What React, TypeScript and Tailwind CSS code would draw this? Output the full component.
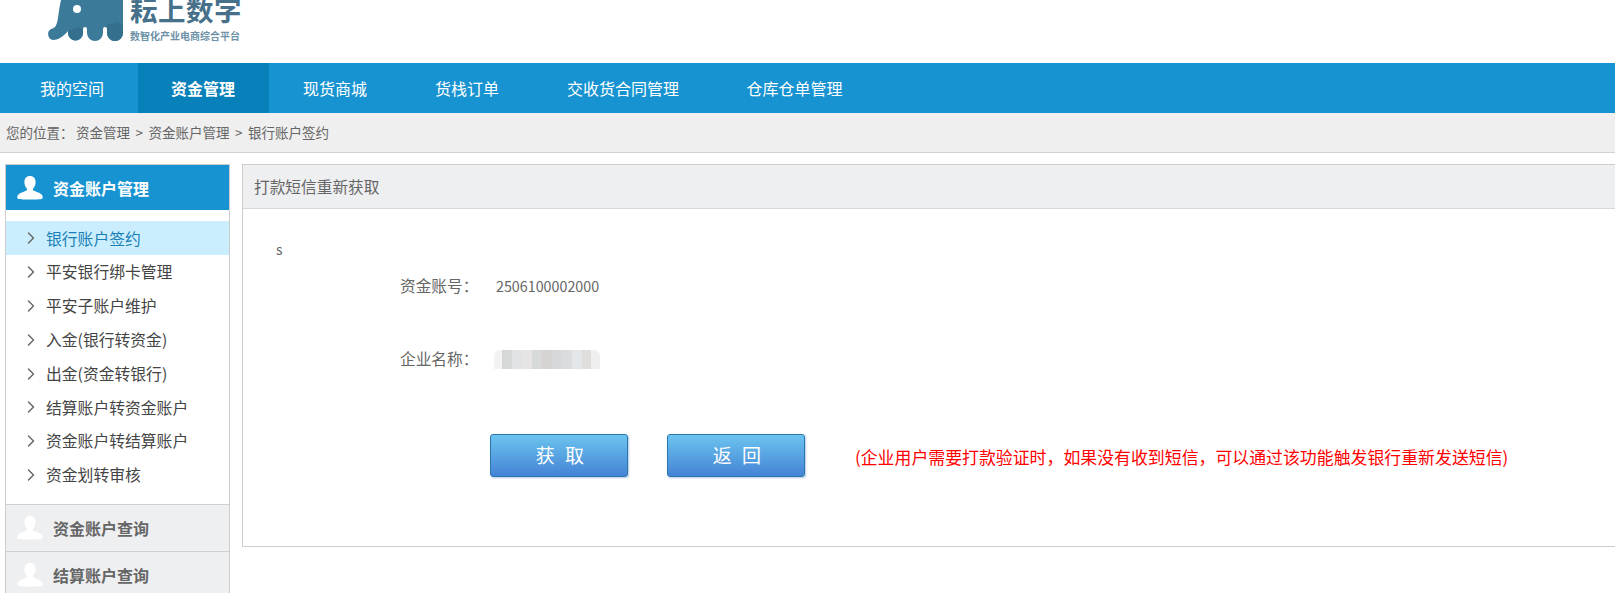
import React from 'react';
import { ChevronRight } from 'lucide-react';

const font = "font-['Noto_Sans_CJK_SC','Liberation_Sans',sans-serif]";

const navItems = [
  { label: '我的空间', pad: 'pl-[40px] pr-[34px]' },
  { label: '资金管理', pad: 'pl-[33px] pr-[34px]', active: true },
  { label: '现货商城', pad: 'px-[34px]' },
  { label: '货栈订单', pad: 'px-[34px]' },
  { label: '交收货合同管理', pad: 'px-[34px]' },
  { label: '仓库仓单管理', pad: 'px-[33.500px]' },
];

const menuItems = [
  '银行账户签约',
  '平安银行绑卡管理',
  '平安子账户维护',
  '入金(银行转资金)',
  '出金(资金转银行)',
  '结算账户转资金账户',
  '资金账户转结算账户',
  '资金划转审核',
];

// mosaic over the company name
const mosaic = [
  'w-[8px] bg-[#f3f3f3]',
  'w-[10px] bg-[#d6d8d8]',
  'w-[10px] bg-[#e1e3e5]',
  'w-[10px] bg-[#e6e5e3]',
  'w-[10px] bg-[#d8dada]',
  'w-[10px] bg-[#d6d3d0]',
  'w-[10px] bg-[#d6d9dc]',
  'w-[10px] bg-[#dadddd]',
  'w-[10px] bg-[#e4e7e9]',
  'w-[9px] bg-[#dfdedd]',
  'w-[9px] bg-[#efefef] rounded-tr-[6px]',
];

const UserIcon = ({ className }: { className: string }) => (
  <svg viewBox="0 0 26 24" className={className} fill="currentColor">
    <path d="M13 0c3.600 0 5.600 2.600 5.600 6 0 2.600-1 5-2.400 6.400-.5.6-.4 1.600.3 2 2.400 1.200 7.200 2.400 8.800 5 .7 1.300.6 3.200-.8 3.600-1 .3-3 .5-11.500.5s-10.500-.2-11.500-.5C.1 22.600 0 20.700.7 19.400c1.600-2.600 6.400-3.800 8.800-5 .7-.4.8-1.400.3-2C8.400 11 7.400 8.600 7.400 6 7.400 2.600 9.400 0 13 0z" />
  </svg>
);

const Logo = () => (
  <div className="flex items-start pl-[47px] h-[63px] overflow-hidden">
    <svg viewBox="0 0 76 41" className="w-[76px] h-[41px] shrink-0" fill="#3c7a9a">
      <path d="M14 0H76V33a8 8 0 0 1-16 0V29a2 2 0 0 0-4 0V33a8 8 0 0 1-16 0V29a2 2 0 0 0-4 0V33a7.500 7.500 0 0 1-15 0V31C18 35 12 40 6 40A6 6 0 0 1 4 29C9 28 10 24 11 18C12 10 13 4 14 0Z" />
      <path d="M21 31C24 30 28 29 31 27L36 29V33a7.500 7.500 0 0 1-15 0Z" fill="#346f8e" />
      <path d="M60 24C64 24 68 24 70 22L76 25V33a8 8 0 0 1-16 0Z" fill="#346f8e" />
      <circle cx="30" cy="9" r="4" fill="#fff" />
    </svg>
    <div className="ml-[7px] flex flex-col">
      <span className="mt-[-5px] text-[27.500px] leading-[28px] font-bold tracking-[0.5px] text-[#47708a] whitespace-nowrap">耘上数字</span>
      <span className="mt-[7px] text-[10px] leading-[12px] font-bold text-[#6d92a8] whitespace-nowrap">数智化产业电商综合平台</span>
    </div>
  </div>
);

export default function App() {
  return (
    <div className={`${font} w-[1615px] h-[593px] overflow-hidden bg-white text-[#666]`}>
      <Logo />

      <nav className="flex h-[50px] pb-[1px] bg-[#1793d1] text-white text-[16px]">
        {navItems.map((item) => (
          <a
            key={item.label}
            className={`flex items-center shrink-0 mb-[-1px] pb-[1px] ${item.pad} ${item.active ? 'bg-[#0880ba] font-bold' : ''}`}
          >
            {item.label}
          </a>
        ))}
      </nav>

      <div className="flex items-center h-[40px] pl-[6px] bg-[#efefef] border-b border-[#d0d0d0] text-[13.500px] text-[#666]">
        <span className="w-[70px] whitespace-nowrap">您的位置：</span>
        <span>资金管理</span>
        <span className="mx-[5.500px]">&gt;</span>
        <span>资金账户管理</span>
        <span className="mx-[5.500px]">&gt;</span>
        <span>银行账户签约</span>
      </div>

      <div className="flex items-start pt-[11px] pl-[5px]">
        <aside className="w-[225px] shrink-0 border-x border-t border-[#ccc]">
          <div className="flex items-center h-[45px] bg-[#1793d1] text-white text-[16px] font-bold">
            <UserIcon className="w-[26px] h-[24px] ml-[11px] mr-[10px] text-white" />
            资金账户管理
          </div>
          <ul className="pt-[11px] pb-[13px]">
            {menuItems.map((label, i) => (
              <li
                key={label}
                className={`flex items-center h-[33.800px] pt-[1px] text-[15.800px] whitespace-nowrap ${i === 0 ? 'bg-[#cbeeff] text-[#1a7fb5]' : 'text-[#444]'}`}
              >
                <ChevronRight className="w-[20px] h-[20px] ml-[15px] mr-[5px] text-[#666]" strokeWidth={1.700} />
                {label}
              </li>
            ))}
          </ul>
          {['资金账户查询', '结算账户查询'].map((label) => (
            <div
              key={label}
              className="flex items-center h-[47px] bg-[#eeeff1] border-t border-[#d0d0d0] text-[16px] font-bold text-[#666]"
            >
              <UserIcon className="w-[26px] h-[24px] ml-[11px] mr-[10px] text-white" />
              {label}
            </div>
          ))}
        </aside>

        <main className="ml-[12px] w-[1400px] shrink-0 h-[383px] border border-[#ccc]">
          <div className="flex items-center h-[44px] pl-[11px] bg-[#eeeff1] border-b border-[#d8d8d8] text-[15.700px] text-[#666]">
            打款短信重新获取
          </div>
          <div className="pl-[33px] pt-[30px] text-[14px] leading-[20px]">s</div>
          <div className="flex items-center pl-[157px] mt-[15px] h-[24px] text-[15.700px]">
            <span className="w-[96px] whitespace-nowrap">资金账号：</span>
            <span className="text-[14.300px]">2506100002000</span>
          </div>
          <div className="flex items-center pl-[157px] mt-[49px] h-[24px] text-[15.700px]">
            <span className="w-[94px] whitespace-nowrap">企业名称：</span>
            <div className="flex h-[19px] mt-[1px] overflow-hidden rounded-tl-[6px]">
              {mosaic.map((cell, i) => (
                <div key={i} className={cell} />
              ))}
            </div>
          </div>
          <div className="flex items-center pl-[247px] mt-[63px]">
            <button className="w-[138px] h-[43px] pl-[5px] rounded-[3px] border border-[#2a77ad] bg-gradient-to-b from-[#6cc4ee] to-[#4683d6] shadow-[1px_1px_2px_rgba(70,120,180,0.4)] text-white text-[19px] tracking-[3px]">
              获 取
            </button>
            <button className="ml-[39px] w-[138px] h-[43px] pl-[5px] rounded-[3px] border border-[#2a77ad] bg-gradient-to-b from-[#6cc4ee] to-[#4683d6] shadow-[1px_1px_2px_rgba(70,120,180,0.4)] text-white text-[19px] tracking-[3px]">
              返 回
            </button>
            <span className="ml-[50px] mt-[3px] text-[16.900px] text-[#ff0000] whitespace-nowrap">
              (企业用户需要打款验证时，如果没有收到短信，可以通过该功能触发银行重新发送短信)
            </span>
          </div>
        </main>
      </div>
    </div>
  );
}
